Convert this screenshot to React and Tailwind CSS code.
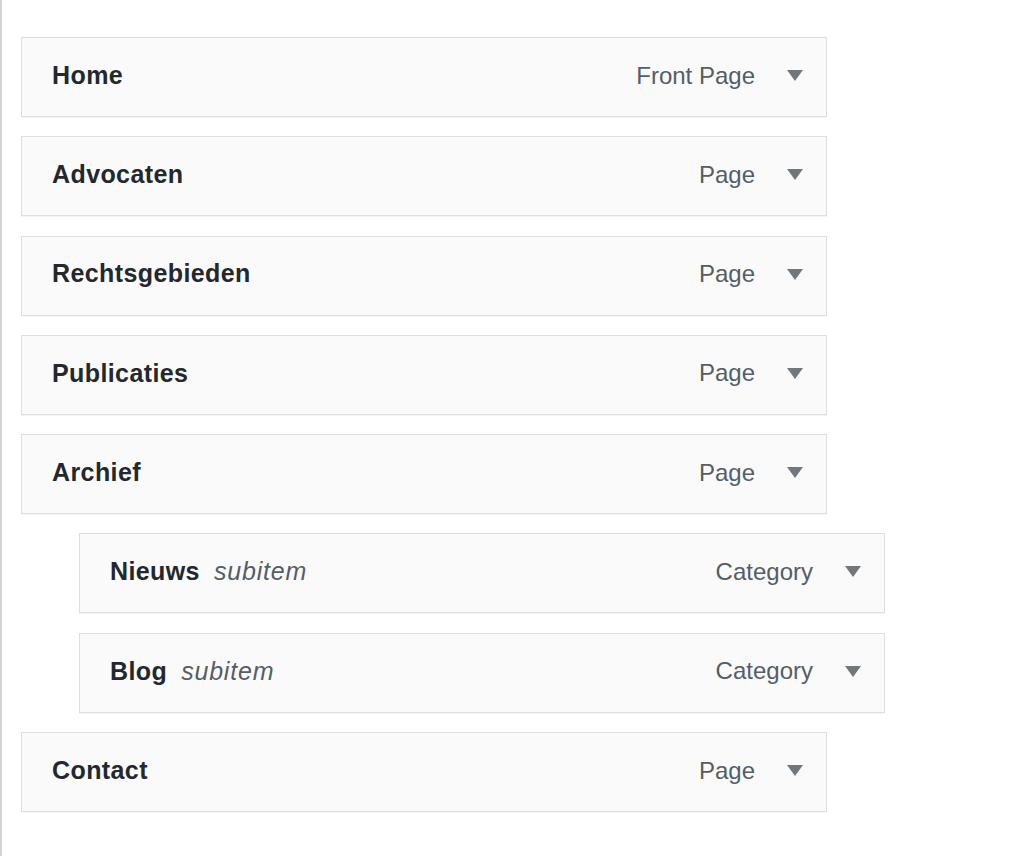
import React from "react";

const items = [
  { title: "Home", type: "Front Page" },
  { title: "Advocaten", type: "Page" },
  { title: "Rechtsgebieden", type: "Page" },
  { title: "Publicaties", type: "Page" },
  { title: "Archief", type: "Page" },
  { title: "Nieuws", type: "Category", sub: true },
  { title: "Blog", type: "Category", sub: true },
  { title: "Contact", type: "Page" },
];

function Arrow() {
  return (
    <svg width="16" height="11" viewBox="0 0 16 11" className="block">
      <path d="M0 0 H16 L8 11 Z" fill="#72777c" />
    </svg>
  );
}

function Item({ title, type, sub }) {
  return (
    <div
      className={
        "flex h-[80px] w-[806px] items-center justify-between border border-[#dfdfdf] bg-[#fafafa] pb-[3px] pl-[30px] pr-[23px] shadow-[0_1px_1px_rgba(0,0,0,0.04)] " +
        (sub ? "ml-[58px]" : "")
      }
    >
      <div className="flex items-baseline">
        <span className="text-[25px] font-bold tracking-[0.4px] text-[#23282d]">{title}</span>
        {sub && (
          <span className="ml-[14px] text-[25px] italic tracking-[0.8px] text-[#555d66]">subitem</span>
        )}
      </div>
      <div className="flex items-center">
        <span className="text-[24px] text-[#555d66]">{type}</span>
        <span className="ml-[32px]">
          <Arrow />
        </span>
      </div>
    </div>
  );
}

export default function App() {
  return (
    <div
      className="min-h-[856px] w-full border-l-2 border-[#d3d3d3] bg-white pl-[19px] pt-[37px]"
      style={{ fontFamily: '"Liberation Sans", Arial, sans-serif' }}
    >
      <div className="flex flex-col gap-[19.3px]">
        {items.map((it) => (
          <Item key={it.title} {...it} />
        ))}
      </div>
    </div>
  );
}
